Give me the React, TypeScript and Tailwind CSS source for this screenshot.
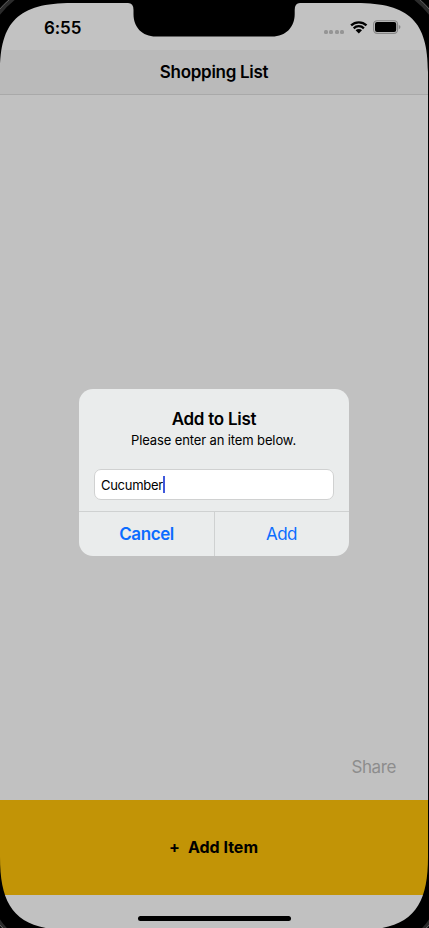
import React from "react";

function StatusBar() {
  return (
    <div className="flex h-[50px] shrink-0 items-start justify-between bg-[#c2c2c2] pl-[44px] pr-[28px]">
      <span className="mt-[16px] text-[17px] font-semibold leading-6 tracking-[-0.1px]">6:55</span>
      <div className="mt-[20px] flex items-start">
        <div className="mt-[10px] flex gap-[1.5px]">
          <i className="size-[4px] rounded-[1.5px] bg-[#959595]" />
          <i className="size-[4px] rounded-[1.5px] bg-[#959595]" />
          <i className="size-[4px] rounded-[1.5px] bg-[#959595]" />
          <i className="size-[4px] rounded-[1.5px] bg-[#959595]" />
        </div>
        <svg className="ml-[5.5px]" width="18" height="14" viewBox="0 0 18 14">
          <path d="M0.3 4.6A12.3 12.3 0 0 1 17.300 4.600L15.700 6.300A9.700 9.700 0 0 0 1.900 6.300Z" fill="#000" />
          <path d="M2.900 7.500A8.300 8.300 0 0 1 14.700 7.500L13.100 9.200A5.800 5.800 0 0 0 4.500 9.200Z" fill="#000" />
          <path d="M5.600 10.300A4.400 4.400 0 0 1 12 10.300L8.800 13.500Z" fill="#000" />
        </svg>
        <svg className="ml-[5.5px]" width="28" height="14" viewBox="0 0 28 14">
          <rect x="0.6" y="0.7" width="24" height="12.7" rx="3.6" fill="none" stroke="#868686" strokeWidth="1.1" />
          <rect x="2" y="2.1" width="21.2" height="9.8" rx="2" fill="#000" />
          <path d="M25.800 5v4.200q1.700-.6 1.700-2.100t-1.700-2.100z" fill="#868686" />
        </svg>
      </div>
    </div>
  );
}

function AlertDialog() {
  return (
    <div className="absolute left-[79px] top-[389px] flex h-[167px] w-[270px] flex-col overflow-hidden rounded-[14px] bg-[#eaecec]">
      <h2 className="mt-[19px] text-center text-[17px] font-semibold leading-[22px] tracking-[-0.25px]">Add to List</h2>
      <p className="mt-[1px] pr-px text-center text-[13px] leading-[18px] tracking-[-0.12px]">Please enter an item below.</p>
      <div className="mx-[15px] mt-[20px] flex h-[31px] shrink-0 items-center rounded-[7px] border border-[#d0d1d1] bg-white pl-[6px]">
        <span className="pt-[2px] text-[13px] tracking-[-0.28px]">Cucumber</span>
        <i className="h-[17px] w-[2px] bg-[#4059dc]" />
      </div>
      <div className="mt-[11px] flex flex-1 border-t border-[#cfd1d1] text-[17px] text-[#0c6cff]">
        <button className="w-[136px] border-r border-[#cfd1d1] pt-[2px] font-semibold tracking-[-0.4px]">Cancel</button>
        <button className="flex-1 pr-px pt-[2px] tracking-[-0.5px]">Add</button>
      </div>
    </div>
  );
}

function DeviceFrame() {
  return (
    <svg className="pointer-events-none absolute inset-0" width="429" height="928" viewBox="0 0 429 928">
      <path
        fillRule="evenodd"
        fill="#000"
        d="M0 0H429V929H0ZM0 72C0 22 18 3 72 3H128Q133.500 3 133.500 10V14C133.500 27 142 36.500 156 36.500H272C286 36.500 294.700 27 294.700 14V10Q294.700 3 300 3H356C410 3 428 22 428 72V857C428 907 412 930 358 930H70C16 930 0 907 0 857Z"
      />
      <g fill="none" stroke="#2b2b2b" strokeWidth="4">
        <path d="M-2 14Q5 5 14 -2" />
        <path d="M415 -2Q424 5 431 14" />
        <path d="M-2 920Q2 926 7 931" />
        <path d="M431 920Q427 926 422 931" />
      </g>
      <g fill="none" stroke="#777" strokeWidth="0.7">
        <path d="M-1 10Q4 4 10 -1" />
        <path d="M419 -1Q425 4 430 10" />
        <path d="M-1 924L4 929" />
        <path d="M430 924L425 929" />
      </g>
    </svg>
  );
}

export default function App() {
  return (
    <div className="relative flex h-[928px] w-[429px] flex-col overflow-hidden bg-[#c1c1c1] font-['Inter','Liberation_Sans',sans-serif] text-black">
      <StatusBar />
      <header className="flex h-[45px] shrink-0 items-center justify-center border-b border-[#a9a9a9] bg-[#bababa] pr-px pt-[2px]">
        <h1 className="text-[17px] font-semibold tracking-[-0.3px]">Shopping List</h1>
      </header>
      <main className="flex flex-1 flex-col items-end justify-end pb-[21px] pr-[33px]">
        <button className="text-[17px] leading-6 tracking-[-0.4px] text-[#8d8d8d]">Share</button>
      </main>
      <button className="flex h-[95px] shrink-0 items-center justify-center gap-[8px] bg-[#c29406] pb-px pr-[2px] text-[16px] font-bold">
        <span>+</span>
        <span>Add Item</span>
      </button>
      <footer className="flex h-[33px] shrink-0 justify-center pt-[21px]">
        <div className="h-[5px] w-[153px] rounded-full bg-black" />
      </footer>
      <AlertDialog />
      <DeviceFrame />
    </div>
  );
}
